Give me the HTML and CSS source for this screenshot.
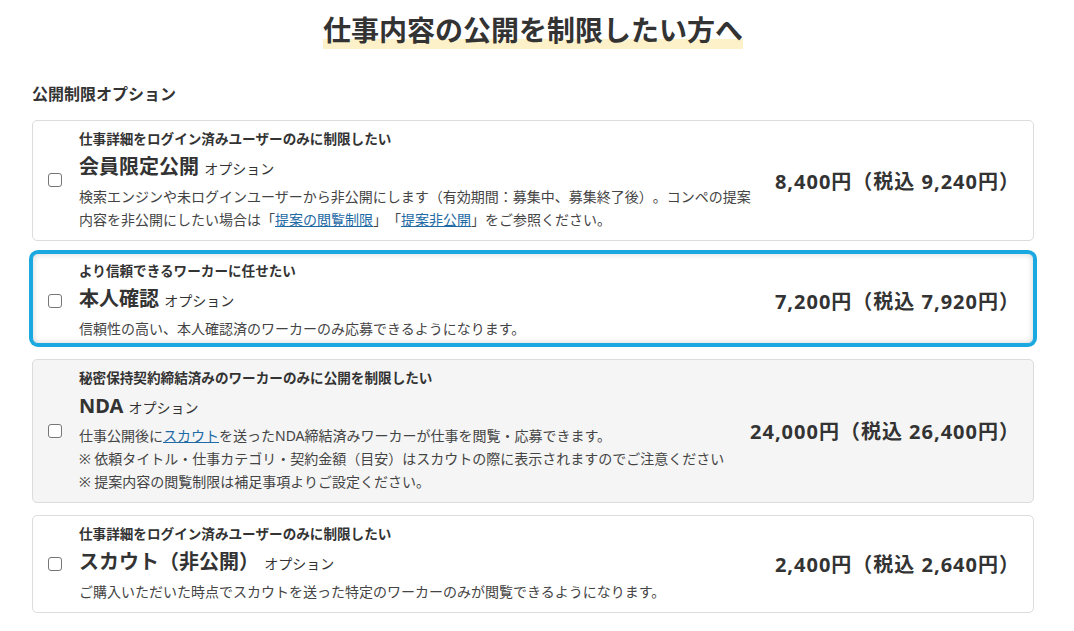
FILE: index.html
```html
<!DOCTYPE html>
<html lang="ja">
<head>
<meta charset="utf-8">
<title>仕事内容の公開を制限したい方へ</title>
<link rel="stylesheet" href="styles.css">
</head>
<body>
<main class="page">
  <h1 class="page-title"><span class="hl">仕事内容の公開を制限したい方へ</span></h1>
  <h2 class="section-label">公開制限オプション</h2>
  <div class="options">
    <label class="option">
      <input type="checkbox" class="check">
      <div class="body">
        <p class="sub">仕事詳細をログイン済みユーザーのみに制限したい</p>
        <p class="name"><strong>会員限定公開</strong> <span class="tag">オプション</span></p>
        <p class="desc">検索エンジンや未ログインユーザーから非公開にします（有効期間：募集中、募集終了後）。コンペの提案内容を非公開にしたい場合は「<a href="#">提案の閲覧制限</a>」「<a href="#">提案非公開</a>」をご参照ください。</p>
      </div>
      <div class="price">8,400円（税込 9,240円）</div>
    </label>
    <label class="option selected">
      <input type="checkbox" class="check">
      <div class="body">
        <p class="sub">より信頼できるワーカーに任せたい</p>
        <p class="name"><strong>本人確認</strong> <span class="tag">オプション</span></p>
        <p class="desc">信頼性の高い、本人確認済のワーカーのみ応募できるようになります。</p>
      </div>
      <div class="price">7,200円（税込 7,920円）</div>
    </label>
    <label class="option muted">
      <input type="checkbox" class="check">
      <div class="body">
        <p class="sub">秘密保持契約締結済みのワーカーのみに公開を制限したい</p>
        <p class="name"><strong>NDA</strong> <span class="tag">オプション</span></p>
        <p class="desc">仕事公開後に<a href="#">スカウト</a>を送ったNDA締結済みワーカーが仕事を閲覧・応募できます。</p>
        <p class="desc">※ 依頼タイトル・仕事カテゴリ・契約金額（目安）はスカウトの際に表示されますのでご注意ください</p>
        <p class="desc">※ 提案内容の閲覧制限は補足事項よりご設定ください。</p>
      </div>
      <div class="price">24,000円（税込 26,400円）</div>
    </label>
    <label class="option">
      <input type="checkbox" class="check">
      <div class="body">
        <p class="sub">仕事詳細をログイン済みユーザーのみに制限したい</p>
        <p class="name"><strong>スカウト（非公開）</strong> <span class="tag">オプション</span></p>
        <p class="desc">ご購入いただいた時点でスカウトを送った特定のワーカーのみが閲覧できるようになります。</p>
      </div>
      <div class="price">2,400円（税込 2,640円）</div>
    </label>
  </div>
</main>
</body>
</html>
```
FILE: styles.css
```css
* { box-sizing: border-box; }
html, body { margin: 0; padding: 0; background: #fff; }
body {
  font-family: "Noto Sans", "Noto Sans CJK JP", sans-serif;
  color: #333;
  text-spacing-trim: space-all;
}
.page { padding: 10px 40px 0 32px; }
.page-title {
  margin: 0;
  text-align: center;
  font-size: 28px;
  line-height: 40px;
  font-weight: 700;
  color: #333;
}
.hl {
  background: linear-gradient(to bottom, transparent 74%, #fdf1c9 74%);
}
.section-label {
  margin: 32px 0 0;
  font-size: 16px;
  line-height: 24px;
  font-weight: 700;
}
.options {
  margin-top: 14px;
  display: flex;
  flex-direction: column;
  gap: 12px;
}
.option {
  display: flex;
  align-items: center;
  border: 1px solid #dcdcdc;
  border-radius: 5px;
  padding: 8px 14px 9px 15px;
  background: #fff;
  cursor: pointer;
}
.option.muted { background: #f5f5f5; }
.option.selected {
  margin: 0 0 3px;
  padding-top: 7px;
  padding-bottom: 3px;
  border-color: #1aa8e0;
  border-radius: 6px;
  box-shadow: 0 0 0 3px #1aa8e0, inset 0 0 6px rgba(0, 0, 0, 0.18);
}
.check {
  appearance: none;
  -webkit-appearance: none;
  flex: none;
  width: 14px;
  height: 14px;
  margin: 0 17px 0 0;
  border: 1px solid #767676;
  border-radius: 3px;
  background: #fff;
}
.body {
  flex: 1;
  max-width: 680px;
  margin-right: 12px;
}
.body p { margin: 0; }
.sub {
  font-size: 13.6px;
  line-height: 20px;
  font-weight: 700;
}
.name {
  margin-top: 4px !important;
  font-size: 20px;
  line-height: 28px;
}
.name strong { font-weight: 700; }
.tag { font-size: 14px; font-weight: 400; }
.desc {
  font-size: 14px;
  line-height: 23px;
  color: #444;
}
.name + .desc { margin-top: 2px; }
.desc a { color: #1d6aa5; text-decoration: underline; }
.price {
  flex: none;
  margin-left: auto;
  margin-right: -1px;
  font-size: 20px;
  font-weight: 700;
  letter-spacing: 1px;
  white-space: nowrap;
  color: #333;
}
```
